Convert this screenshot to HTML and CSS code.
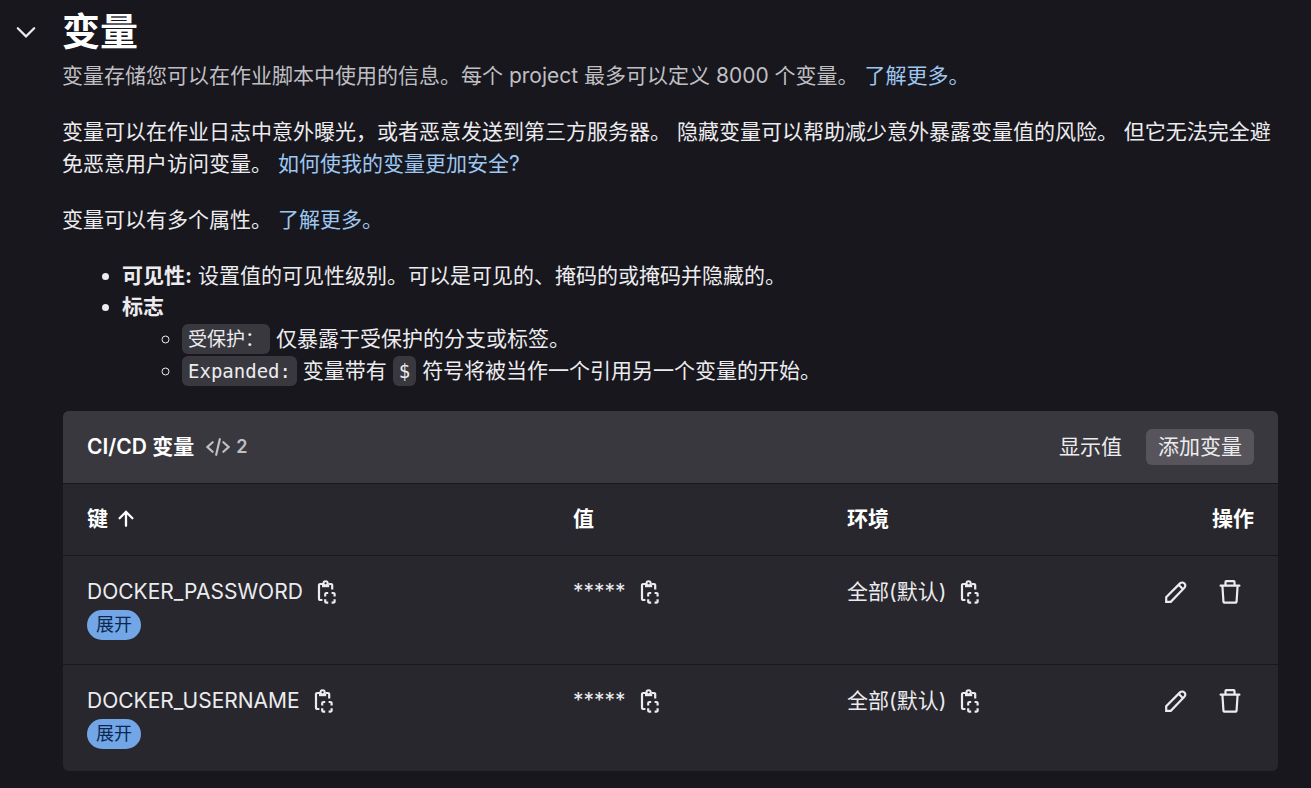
FILE: index.html
```html
<!DOCTYPE html>
<html lang="zh-CN">
<head>
  <meta charset="UTF-8" />
  <meta name="viewport" content="width=device-width, initial-scale=1.0"/>
  <title>CI/CD 变量</title>
  <link rel="stylesheet" href="styles.css">
</head>
<body>
  <!-- shared icons -->
  <svg class="sprite" aria-hidden="true">
    <symbol id="chevron" viewBox="0 0 24 24">
      <path d="M3.8 8.2 12 16.4l8.2-8.2" stroke-width="2.2" stroke-linecap="round"/>
    </symbol>
    <symbol id="code" viewBox="0 0 24 24">
      <path d="M6.6 7.2 1.4 12l5.2 4.8M17.4 7.2l5.2 4.8-5.2 4.8M13.8 4.2l-3.6 15.6" stroke-width="2.2" stroke-linecap="round"/>
    </symbol>
    <symbol id="arrow-up" viewBox="0 0 24 24">
      <path d="M12 18.8V5.2M5.6 11.2 12 4.8l6.4 6.4" stroke-width="2.3" stroke-linecap="round"/>
    </symbol>
    <symbol id="copy" viewBox="0 0 24 24">
      <path d="M7.4 20H5.6A1.6 1.6 0 0 1 4 18.4V5.2a1.2 1.2 0 0 1 1.2-1.2H8M13.4 4H16a1.2 1.2 0 0 1 1.2 1.2V9.6" stroke-width="2.2"/>
      <circle cx="10.6" cy="3.3" r="2.1" stroke-width="2"/>
      <path d="M7 4.8h7.2v2.4H7z" fill="currentColor" stroke="none"/>
      <path d="M10.2 16.4v-2.2a1.2 1.2 0 0 1 1.2-1.2h1.8M16.6 13h1.8a1.2 1.2 0 0 1 1.2 1.2v2.2M19.6 19.2v2.2a1.2 1.2 0 0 1-1.2 1.2h-1.8M13.2 22.6h-1.8a1.2 1.2 0 0 1-1.2-1.2v-2.2" stroke-width="2.2"/>
    </symbol>
    <symbol id="pencil" viewBox="0 0 24 24">
      <path d="M2.2 21.8v-4.6L16 3.4a3.1 3.1 0 0 1 4.4 0 3.1 3.1 0 0 1 0 4.4L6.8 21.8zM14.6 4.8l4.4 4.4" stroke-width="2.2"/>
    </symbol>
    <symbol id="trash" viewBox="0 0 24 24">
      <path d="M2.6 5.7h18.8M7.5 5.4V1.9a.8.8 0 0 1 .8-.8h7.4a.8.8 0 0 1 .8.8v3.5M4.4 5.8l1 15.3a1.7 1.7 0 0 0 1.7 1.6h9.8a1.7 1.7 0 0 0 1.7-1.6l1-15.3" stroke-width="2.2" stroke-linecap="round"/>
    </symbol>
  </svg>

  <section class="settings">
    <button class="icon-btn toggle" aria-label="收起"><svg class="icon"><use href="#chevron"/></svg></button>

    <div class="content">
      <h1>变量</h1>
      <p class="subtitle">变量存储您可以在作业脚本中使用的信息。每个 project 最多可以定义 8000 个变量。 <a href="#">了解更多。</a></p>

      <p>变量可以在作业日志中意外曝光，或者恶意发送到第三方服务器。 隐藏变量可以帮助减少意外暴露变量值的风险。 但它无法完全避免恶意用户访问变量。 <a href="#">如何使我的变量更加安全?</a></p>

      <p>变量可以有多个属性。 <a href="#">了解更多。</a></p>

      <ul class="attributes">
        <li><strong>可见性:</strong> 设置值的可见性级别。可以是可见的、掩码的或掩码并隐藏的。</li>
        <li><strong>标志</strong>
          <ul class="flags">
            <li><code>受保护：</code> 仅暴露于受保护的分支或标签。</li>
            <li><code>Expanded:</code> 变量带有 <code>$</code> 符号将被当作一个引用另一个变量的开始。</li>
          </ul>
        </li>
      </ul>

      <div class="card">
        <div class="card-header">
          <h2>CI/CD 变量</h2>
          <span class="count"><svg class="icon"><use href="#code"/></svg>2</span>
          <div class="card-actions">
            <button class="btn btn-plain">显示值</button>
            <button class="btn">添加变量</button>
          </div>
        </div>

        <table>
          <thead>
            <tr>
              <th class="col-key"><span class="cell">键 <svg class="icon"><use href="#arrow-up"/></svg></span></th>
              <th class="col-value">值</th>
              <th>环境</th>
              <th class="col-actions">操作</th>
            </tr>
          </thead>
          <tbody>
            <tr>
              <td>
                <div class="cell">DOCKER_PASSWORD <button class="icon-btn" aria-label="复制键"><svg class="icon"><use href="#copy"/></svg></button></div>
                <span class="badge">展开</span>
              </td>
              <td><div class="cell">***** <button class="icon-btn" aria-label="复制值"><svg class="icon"><use href="#copy"/></svg></button></div></td>
              <td><div class="cell">全部(默认) <button class="icon-btn" aria-label="复制环境"><svg class="icon"><use href="#copy"/></svg></button></div></td>
              <td>
                <div class="row-actions">
                  <button class="icon-btn" aria-label="编辑"><svg class="icon"><use href="#pencil"/></svg></button>
                  <button class="icon-btn" aria-label="删除"><svg class="icon"><use href="#trash"/></svg></button>
                </div>
              </td>
            </tr>
            <tr>
              <td>
                <div class="cell">DOCKER_USERNAME <button class="icon-btn" aria-label="复制键"><svg class="icon"><use href="#copy"/></svg></button></div>
                <span class="badge">展开</span>
              </td>
              <td><div class="cell">***** <button class="icon-btn" aria-label="复制值"><svg class="icon"><use href="#copy"/></svg></button></div></td>
              <td><div class="cell">全部(默认) <button class="icon-btn" aria-label="复制环境"><svg class="icon"><use href="#copy"/></svg></button></div></td>
              <td>
                <div class="row-actions">
                  <button class="icon-btn" aria-label="编辑"><svg class="icon"><use href="#pencil"/></svg></button>
                  <button class="icon-btn" aria-label="删除"><svg class="icon"><use href="#trash"/></svg></button>
                </div>
              </td>
            </tr>
          </tbody>
        </table>
      </div>
    </div>
  </section>
</body>
</html>
```
FILE: styles.css
```css
:root {
  --bg: #18171d;
  --card: #28272d;
  --card-header: #3a383f;
  --button: #57555b;
  --text: #ececef;
  --muted: #bfbfc3;
  --heading: #ffffff;
  --link: #9dc7f1;
  --badge: #73a6e6;
  --badge-text: #0a2850;
}

* {
  box-sizing: border-box;
}

body {
  margin: 0;
  background: var(--bg);
  color: var(--text);
  font-family: Inter, "Noto Sans CJK SC", sans-serif;
  font-size: 21px;
  line-height: 32px;
}

.sprite {
  position: absolute;
  width: 0;
  height: 0;
}

.icon {
  display: block;
  flex: none;
  width: 24px;
  height: 24px;
  fill: none;
  stroke: currentColor;
}

.settings {
  display: flex;
  align-items: flex-start;
  gap: 24px;
  padding: 4px 33px 17px 14px;
}

.toggle {
  margin-top: 16px;
}

.content {
  flex: 1;
  min-width: 0;
}

h1 {
  margin: 0 0 2px;
  color: var(--heading);
  font-size: 38px;
  line-height: 54px;
}

p {
  margin: 0 0 24px;
}

.subtitle {
  color: var(--muted);
}

a {
  color: var(--link);
  text-decoration: none;
}

ul {
  margin: 0;
  padding-left: 60px;
  line-height: 31px;
}

.attributes {
  margin-bottom: 24px;
}

.flags {
  padding-top: 1px;
}

code {
  padding: 4px 6px;
  border-radius: 6px;
  background: var(--card-header);
  font-family: "DejaVu Sans Mono", "Noto Sans CJK SC", monospace;
  font-size: 19px;
}

button {
  margin: 0;
  padding: 0;
  border: none;
  background: none;
  color: inherit;
  font: inherit;
  cursor: pointer;
}

.card {
  margin-left: 1px;
  border-radius: 6px;
  background: var(--card);
  overflow: hidden;
}

.card-header {
  display: flex;
  align-items: center;
  gap: 12px;
  padding: 18px 24px;
  background: var(--card-header);
}

h2 {
  margin: 0;
  color: var(--heading);
  font-size: 21px;
  font-weight: 600;
}

.count {
  display: flex;
  align-items: center;
  gap: 6px;
  color: var(--muted);
  font-size: 18px;
  font-weight: 600;
}

.card-actions {
  display: flex;
  gap: 12px;
  margin-left: auto;
}

.btn {
  height: 36px;
  padding: 0 12px;
  border-radius: 6px;
  background: var(--button);
}

.btn-plain {
  background: none;
}

table {
  width: 100%;
  border-collapse: collapse;
  table-layout: fixed;
}

th,
td {
  padding: 20px 24px 24px;
  border-top: 1px solid var(--bg);
  text-align: left;
  vertical-align: top;
}

th {
  padding: 19px 24px 20px;
  color: var(--heading);
  font-weight: 600;
}

tr:last-child td {
  padding-bottom: 22px;
}

.col-key {
  width: 40%;
}

.col-value {
  width: 274px;
}

.col-actions {
  width: 15%;
  text-align: right;
}

.cell {
  display: flex;
  align-items: center;
  gap: 12px;
}

th .cell {
  gap: 6px;
}

.badge {
  display: block;
  width: fit-content;
  margin-top: 2px;
  padding: 0 9px;
  border-radius: 15px;
  background: var(--badge);
  color: var(--badge-text);
  font-size: 18px;
  line-height: 30px;
}

.row-actions {
  display: flex;
  justify-content: flex-end;
  gap: 6px;
}

.row-actions .icon-btn {
  padding: 4px 12px;
}
```
